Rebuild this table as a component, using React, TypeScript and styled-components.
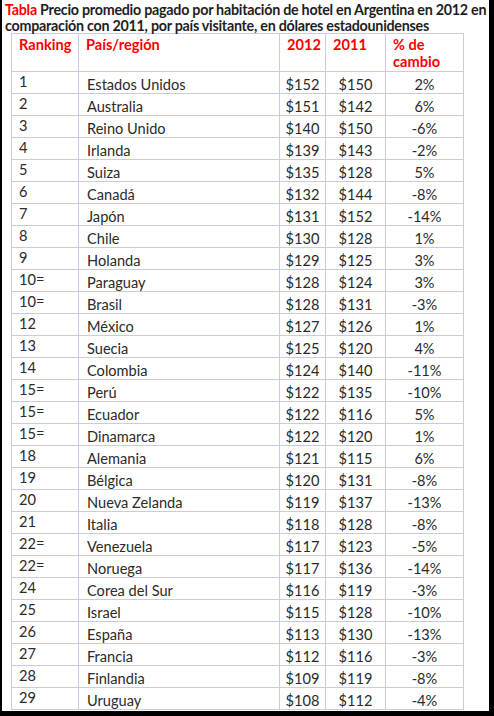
import React from "react";
import styled, { createGlobalStyle } from "styled-components";

const GlobalStyle = createGlobalStyle`
  html, body {
    margin: 0;
    padding: 0;
    background: #000;
  }
  body {
    font-family: "Lato", "Open Sans", sans-serif;
  }
`;

const Frame = styled.div`
  width: 487px;
  height: 711px;
  background: #fff;
  border-left: 2px solid #000;
  border-right: 5px solid #000;
  border-bottom: 5px solid #000;
  overflow: hidden;
`;

const Title = styled.div`
  padding: 2px 0 0 3px;
  height: 31px;
  font-size: 14.3px;
  line-height: 16px;
  font-weight: 700;
  color: #1e1e1e;
  white-space: nowrap;
  letter-spacing: -0.26px;
`;

const Red = styled.span`
  color: #ff0000;
`;

const Table = styled.table`
  margin-left: 9px;
  width: 453px;
  border-collapse: collapse;
  table-layout: fixed;
  font-size: 14.6px;
  color: #2a2a2a;
`;

const Head = styled.th<{ $w: number }>`
  box-sizing: border-box;
  width: ${(p) => p.$w}px;
  height: 38px;
  padding: 2px 0 0 7px;
  border: 1px solid #c8c8f4;
  color: #ff0000;
  font-weight: 700;
  text-align: left;
  vertical-align: top;
  line-height: 17px;
`;

const Row = styled.tr`
  height: 22px;
`;

const Cell = styled.td<{ $align?: "left" | "center"; $raised?: boolean }>`
  border: 1px solid #c8c8f4;
  padding: ${(p) => (p.$raised ? "1px 0 0 7px" : "4px 0 0 0")};
  padding-left: ${(p) => (p.$align === "center" ? "0" : p.$raised ? "7px" : "8px")};
  text-align: ${(p) => p.$align || "left"};
  vertical-align: top;
  line-height: 17px;
  height: 21px;
  box-sizing: border-box;
  white-space: nowrap;
`;

const rows: [string, string, string, string, string][] = [
  ["1", "Estados Unidos", "$152", "$150", "2%"],
  ["2", "Australia", "$151", "$142", "6%"],
  ["3", "Reino Unido", "$140", "$150", "-6%"],
  ["4", "Irlanda", "$139", "$143", "-2%"],
  ["5", "Suiza", "$135", "$128", "5%"],
  ["6", "Canadá", "$132", "$144", "-8%"],
  ["7", "Japón", "$131", "$152", "-14%"],
  ["8", "Chile", "$130", "$128", "1%"],
  ["9", "Holanda", "$129", "$125", "3%"],
  ["10=", "Paraguay", "$128", "$124", "3%"],
  ["10=", "Brasil", "$128", "$131", "-3%"],
  ["12", "México", "$127", "$126", "1%"],
  ["13", "Suecia", "$125", "$120", "4%"],
  ["14", "Colombia", "$124", "$140", "-11%"],
  ["15=", "Perú", "$122", "$135", "-10%"],
  ["15=", "Ecuador", "$122", "$116", "5%"],
  ["15=", "Dinamarca", "$122", "$120", "1%"],
  ["18", "Alemania", "$121", "$115", "6%"],
  ["19", "Bélgica", "$120", "$131", "-8%"],
  ["20", "Nueva Zelanda", "$119", "$137", "-13%"],
  ["21", "Italia", "$118", "$128", "-8%"],
  ["22=", "Venezuela", "$117", "$123", "-5%"],
  ["22=", "Noruega", "$117", "$136", "-14%"],
  ["24", "Corea del Sur", "$116", "$119", "-3%"],
  ["25", "Israel", "$115", "$128", "-10%"],
  ["26", "España", "$113", "$130", "-13%"],
  ["27", "Francia", "$112", "$116", "-3%"],
  ["28", "Finlandia", "$109", "$119", "-8%"],
  ["29", "Uruguay", "$108", "$112", "-4%"],
];

const App = () => {
  return (
    <>
      <GlobalStyle />
      <Frame>
        <Title>
          <Red>Tabla</Red> Precio promedio pagado por habitación de hotel en Argentina en 2012 en
          <br />
          comparación con 2011, por país visitante, en dólares estadounidenses
        </Title>
        <Table>
          <thead>
            <tr>
              <Head $w={67}>Ranking</Head>
              <Head $w={201}>País/región</Head>
              <Head $w={46}>2012</Head>
              <Head $w={60}>2011</Head>
              <Head $w={78}>
                % de
                <br />
                cambio
              </Head>
            </tr>
          </thead>
          <tbody>
            {rows.map((r, i) => (
              <Row key={i}>
                <Cell $raised>{r[0]}</Cell>
                <Cell>{r[1]}</Cell>
                <Cell $align="center">{r[2]}</Cell>
                <Cell $align="center">{r[3]}</Cell>
                <Cell $align="center">{r[4]}</Cell>
              </Row>
            ))}
          </tbody>
        </Table>
      </Frame>
    </>
  );
};

export default App;
